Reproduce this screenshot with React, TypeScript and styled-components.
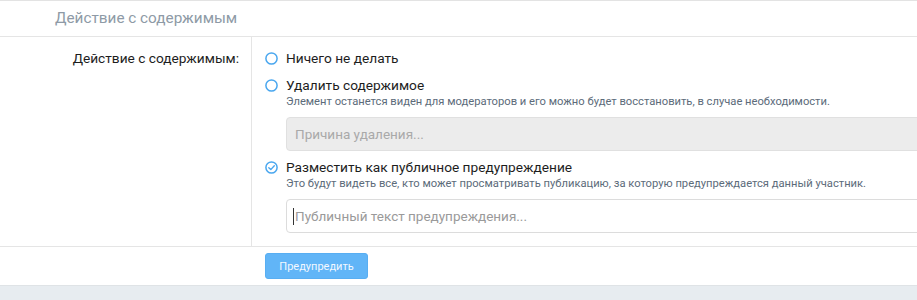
import React from 'react';
import styled, { createGlobalStyle } from 'styled-components';

const GlobalStyle = createGlobalStyle`
  html, body {
    margin: 0;
    padding: 0;
    background: #e7ecf0;
    font-family: Roboto, "Liberation Sans", sans-serif;
    overflow: hidden;
  }
`;

const Block = styled.div`
  background: #fff;
  border-top: 1px solid #e3e3e3;
  border-bottom: 1px solid #dfe3e6;
  width: 917px;
  overflow: hidden;
`;

const BlockHeader = styled.h2`
  margin: 0;
  height: 35px;
  line-height: 35px;
  padding-left: 55px;
  font-size: 15.3px;
  font-weight: 400;
  color: #8e9aa6;
  border-bottom: 1px solid #e5e5e5;
`;

const FormRow = styled.div`
  display: grid;
  grid-template-columns: 252px 1fr;
  border-bottom: 1px solid #e5e5e5;
`;

const RowLabel = styled.dt`
  margin: 0;
  padding: 11px 12px 0 0;
  text-align: right;
  font-size: 13.7px;
  line-height: 20px;
  color: #1d1d1d;
  border-right: 1px solid #e5e5e5;
`;

const RowInput = styled.dd`
  margin: 0;
  padding: 11px 0 13px 13px;
  display: flex;
  flex-direction: column;
`;

const Choice = styled.label<{ $gap?: number }>`
  display: flex;
  align-items: center;
  gap: 8px;
  margin-top: ${(p) => p.$gap ?? 0}px;
  font-size: 13.7px;
  line-height: 20px;
  color: #1d1d1d;
  cursor: pointer;
`;

const Hint = styled.div`
  padding-left: 21px;
  font-size: 11.2px;
  line-height: 14px;
  color: #5c6b7a;
`;

const TextBox = styled.input`
  box-sizing: border-box;
  margin: 8px 0 0 21px;
  width: 700px;
  height: 34px;
  padding: 0 8px;
  font-family: inherit;
  font-size: 13.5px;
  color: #141414;
  background: #ececec;
  border: 1px solid #e0e0e0;
  border-radius: 4px;
  outline: none;
  &::placeholder {
    color: #a9a9a9;
  }
`;

const Caret = styled.span`
  display: inline-block;
  width: 1px;
  height: 17px;
  background: #333;
`;

const FakeInput = styled.div`
  box-sizing: border-box;
  margin: 8px 0 0 21px;
  width: 700px;
  height: 34px;
  padding: 0 6px;
  display: flex;
  align-items: center;
  gap: 1px;
  font-size: 13.5px;
  color: #9a9a9a;
  background: #fff;
  border: 1px solid #dcdcdc;
  border-radius: 4px;
`;

const Footer = styled.div`
  padding: 6px 0 6px 265px;
  display: flex;
`;

const Button = styled.button`
  height: 26px;
  width: 103px;
  padding: 0;
  font-family: inherit;
  font-size: 11px;
  color: #f2f8ff;
  background: #61b5f7;
  border: 1px solid #58aef2;
  border-radius: 3px;
  cursor: default;
`;

const RadioIcon = ({ checked }: { checked?: boolean }) => (
  <svg width="13" height="13" viewBox="0 0 13 13" fill="none">
    <circle cx="6.5" cy="6.5" r="5.6" stroke="#4aa7ef" strokeWidth="1.5" />
    {checked && (
      <path d="M3.8 6.7 L5.8 8.6 L9.3 4.7" stroke="#4aa7ef" strokeWidth="1.4" strokeLinecap="round" strokeLinejoin="round" />
    )}
  </svg>
);

export default function App() {
  return (
    <>
      <GlobalStyle />
      <Block>
        <BlockHeader>Действие с содержимым</BlockHeader>
        <FormRow>
          <RowLabel>Действие с содержимым:</RowLabel>
          <RowInput>
            <Choice>
              <RadioIcon />
              Ничего не делать
            </Choice>
            <Choice $gap={7}>
              <RadioIcon />
              Удалить содержимое
            </Choice>
            <Hint>
              Элемент останется виден для модераторов и его можно будет восстановить, в случае необходимости.
            </Hint>
            <TextBox disabled placeholder="Причина удаления..." />
            <Choice $gap={6}>
              <RadioIcon checked />
              Разместить как публичное предупреждение
            </Choice>
            <Hint>
              Это будут видеть все, кто может просматривать публикацию, за которую предупреждается данный участник.
            </Hint>
            <FakeInput>
              <Caret />
              Публичный текст предупреждения...
            </FakeInput>
          </RowInput>
        </FormRow>
        <Footer>
          <Button>Предупредить</Button>
        </Footer>
      </Block>
    </>
  );
}
